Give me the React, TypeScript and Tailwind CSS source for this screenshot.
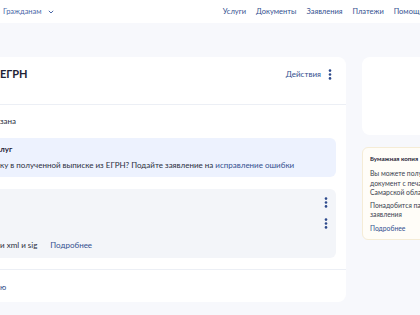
import React from "react";

function Kebab({ className = "" }: { className?: string }) {
  return (
    <svg width="4" height="11" viewBox="0 0 4 11" className={className}>
      <circle cx="2" cy="1.6" r="1.3" fill="#2d4a8c" />
      <circle cx="2" cy="5.5" r="1.3" fill="#2d4a8c" />
      <circle cx="2" cy="9.4" r="1.3" fill="#2d4a8c" />
    </svg>
  );
}

export default function App() {
  return (
    <div
      className="w-[420px] h-[315px] overflow-hidden bg-[#f7f8fc] text-[#1e2235]"
      style={{ fontFamily: "Lato, 'Noto Sans', sans-serif" }}
    >
      {/* Top bar */}
      <div className="h-[23px] bg-white flex items-center justify-between pl-[3px] text-[7.5px]">
        <div className="flex items-center gap-[6px] text-[#4a68a8]">
          <span>Гражданам</span>
          <svg width="6" height="4" viewBox="0 0 6 4">
            <path d="M0.8 0.8 L3 3 L5.2 0.8" fill="none" stroke="#4a68a8" strokeWidth="1" />
          </svg>
        </div>
        <nav className="flex items-center gap-[10px] text-[#33508f] whitespace-nowrap -mr-[3px]">
          <span>Услуги</span>
          <span>Документы</span>
          <span>Заявления</span>
          <span>Платежи</span>
          <span>Помощь</span>
        </nav>
      </div>

      {/* Main */}
      <div className="flex gap-[16px] pt-[34px]">
        <div className="w-[346px] shrink-0 bg-white rounded-r-lg">
          <div className="h-[47px] flex items-start justify-between pt-[11px] pr-[14px]">
            <span className="text-[11px] leading-[12px] font-bold">ЕГРН</span>
            <div className="flex items-center gap-[7px] text-[8px] leading-[12px] text-[#33508f]">
              <span>Действия</span>
              <Kebab />
            </div>
          </div>
          <div className="border-t border-[#eceff5] pt-[11px]">
            <div className="text-[8px] leading-[10px] text-[#2a2e40]">зана</div>
            <div className="mt-[12px] mr-[10px] bg-[#edf2fe] rounded-r-md pt-[6px] pb-[7px]">
              <div className="text-[8px] leading-[10px] font-bold">луг</div>
              <div className="mt-[6px] text-[8px] leading-[10px] whitespace-nowrap text-[#2a2e40]">
                ку в полученной выписке из ЕГРН? Подайте заявление на{" "}
                <span className="text-[#33508f]">исправление ошибки</span>
              </div>
            </div>
            <div className="mt-[12px] mr-[10px] bg-[#f3f5f9] rounded-r-md pt-[8px] pb-[8px] pr-[8px]">
              <div className="h-[10px] flex items-center justify-end">
                <Kebab />
              </div>
              <div className="mt-[11px] h-[10px] flex items-center justify-end">
                <Kebab />
              </div>
              <div className="mt-[12px] text-[8px] leading-[10px] flex gap-[13px]">
                <span className="text-[#2a2e40]">и xml и sig</span>
                <span className="text-[#33508f]">Подробнее</span>
              </div>
            </div>
          </div>
          <div className="mt-[11px] border-t border-[#eceff5] pt-[12px] pb-[10px]">
            <div className="text-[8px] leading-[10px] text-[#33508f]">ю</div>
          </div>
        </div>

        <div className="flex-1 flex flex-col gap-[12px] min-w-0">
          <div className="h-[78px] bg-white rounded-l-lg -mr-[10px]" />
          <div className="h-[93px] bg-[#fffdf8] border border-[#f5ecd6] rounded-l-md -mr-[10px] pl-[7px] pt-[6px] text-[6.8px] leading-[9.5px] whitespace-nowrap overflow-hidden">
            <div className="font-bold leading-[10px] text-[6.2px]">Бумажная копия</div>
            <div className="mt-[5px] text-[#3a3e4e]">Вы можете получить</div>
            <div className="text-[#3a3e4e]">документ с печатью</div>
            <div className="text-[#3a3e4e]">Самарской области</div>
            <div className="mt-[3px] text-[#3a3e4e]">Понадобится паспорт</div>
            <div className="text-[#3a3e4e]">заявления</div>
            <div className="mt-[4px] text-[#33508f]">Подробнее</div>
          </div>
        </div>
      </div>
    </div>
  );
}
